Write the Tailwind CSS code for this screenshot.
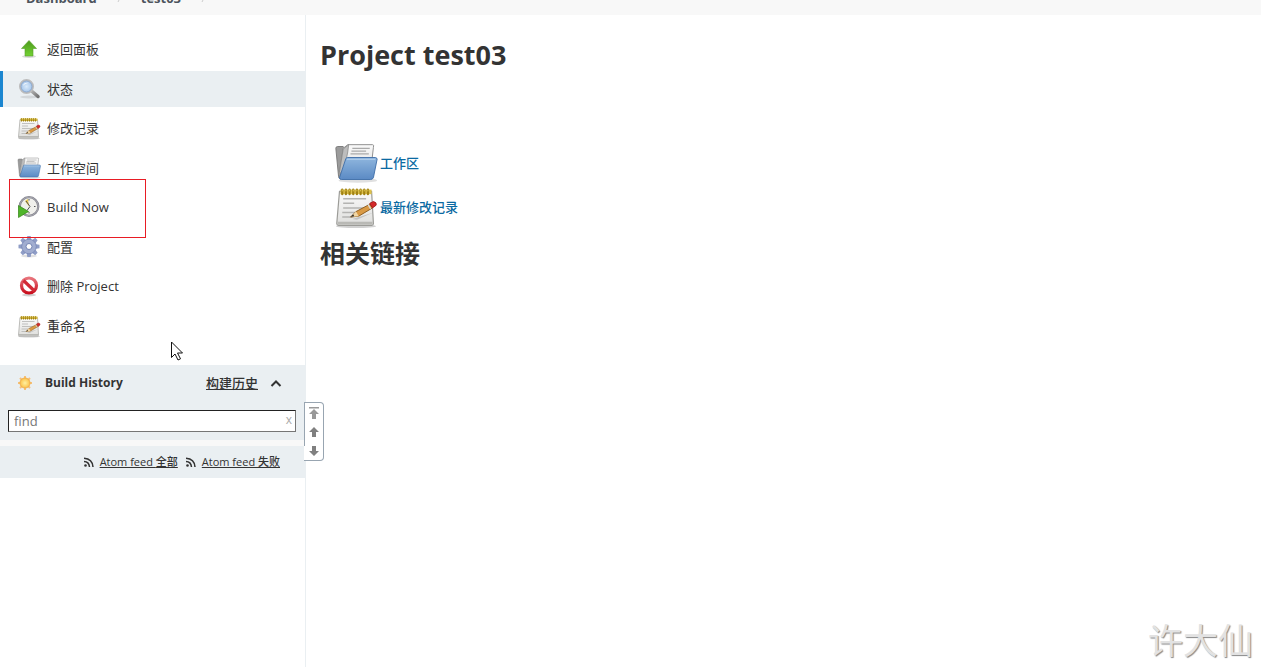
<!DOCTYPE html>
<html lang="zh-CN">
<head>
  <meta charset="UTF-8" />
  <meta name="viewport" content="width=device-width, initial-scale=1.0" />
  <title>test03 [Jenkins]</title>
  <script src="https://cdn.jsdelivr.net/npm/@tailwindcss/browser@4"></script>
  <style>
    body {
      font-family: "Open Sans", "Noto Sans CJK SC", sans-serif;
    }
  </style>
</head>
<body class="relative flex h-screen flex-col overflow-hidden bg-white text-[13px] leading-5 text-[#333]">

  <!-- Shared icons -->
  <svg class="absolute size-0">
    <defs>
      <linearGradient id="green" x1="0" y1="0" x2="0" y2="1"><stop offset="0" stop-color="#4c9a1c"/><stop offset="1" stop-color="#74d234"/></linearGradient>
      <linearGradient id="blue" x1="0" y1="0" x2="0" y2="1"><stop offset="0" stop-color="#8fb6de"/><stop offset="1" stop-color="#5b8ac4"/></linearGradient>
      <linearGradient id="paper" x1="0" y1="0" x2="0" y2="1"><stop offset="0" stop-color="#fafafa"/><stop offset="1" stop-color="#dededc"/></linearGradient>
      <linearGradient id="grey" x1="0" y1="0" x2="1" y2="1"><stop offset="0" stop-color="#b8b8b8"/><stop offset="1" stop-color="#737373"/></linearGradient>
      <linearGradient id="red" x1="0" y1="0" x2="0" y2="1"><stop offset="0" stop-color="#e8747c"/><stop offset="1" stop-color="#c90f1e"/></linearGradient>
      <radialGradient id="lens"><stop offset="0" stop-color="#d9eafa"/><stop offset="1" stop-color="#9fc1e8"/></radialGradient>
      <radialGradient id="sun"><stop offset="0" stop-color="#fff0a0"/><stop offset="1" stop-color="#fbc24a"/></radialGradient>
    </defs>
    <symbol id="notepad" viewBox="0 0 48 48">
      <ellipse cx="24" cy="45" rx="22" ry="2" fill="#000" opacity=".18"/>
      <path d="M6 7h35l2 35q0 2-2 2H5q-2 0-2-2z" fill="url(#paper)" stroke="#9c9c98" stroke-width="1.3"/>
      <path d="M4 40h38v3H4z" fill="#b9b9b5"/>
      <path d="M10 15h25M10 20h12M10 25h24M9 30h15M9 35h11" stroke="#b4b4b2" stroke-width="1.6"/>
      <path d="M7 5h34v5H7z" fill="#dcc04b"/>
      <path d="M9 5v5M13 5v5M17 5v5M21 5v5M25 5v5M29 5v5M33 5v5M37 5v5" stroke="#a18213" stroke-width="2.400" stroke-linecap="round"/>
      <path d="M9 5v2M13 5v2M17 5v2M21 5v2M25 5v2M29 5v2M33 5v2M37 5v2" stroke="#e2c854" stroke-width="1"/>
      <path d="M20 37l23-7-18 8z" fill="#000" opacity=".15"/>
      <path d="M18 35l6-6 15-8 3 4-15 9z" fill="#d99a45" stroke="#8a5a1c"/>
      <path d="M18 35l6-6 3 5z" fill="#f1d6a5"/>
      <path d="M18 35l3-3 1 2z" fill="#222"/>
      <path d="M39 20l3 5 4-3q1-3-3-4z" fill="#d42a2a" stroke="#a31c1c"/>
      <path d="M37 21l3 5" stroke="#ddd" stroke-width="1.500"/>
    </symbol>
    <symbol id="folder" viewBox="0 0 48 48">
      <ellipse cx="26" cy="43" rx="21" ry="2.500" fill="#000" opacity=".12"/>
      <path d="M2 8q0-2 2-2h6l3 4v31H7q-2 0-2-2z" fill="#9b9b9b" stroke="#777"/>
      <path d="M15 4h27q2 0 1 3l-3 26H6l4-25z" fill="url(#paper)" stroke="#888"/>
      <path d="M6 34l4-25 6-5-1 8-5 25z" fill="#bdbdbd" stroke="#858585" stroke-width=".8"/>
      <path d="M20 8h19M19 11h16M18 14h20" stroke="#aaa" stroke-width="1.300"/>
      <path d="M13 19q1-1 2-1h30q2 0 2 2l-4 20q-1 2-3 2H8q-2 0-2-2z" fill="url(#blue)" stroke="#3f6fa8" stroke-width="1"/>
      <path d="M14 20h31" stroke="#b7d2ee"/>
    </symbol>
  </svg>

  <!-- Breadcrumbs -->
  <header class="-mt-6 h-[39px] shrink-0 bg-[#f8f8f8]">
    <nav class="flex items-center gap-5 px-[26px] pt-3 font-bold text-[#4d545d]">
      <a href="#">Dashboard</a>
      <svg class="w-1" viewBox="0 0 4 8"><path d="M1 0l2 4-2 4" fill="none" stroke="#ccc"/></svg>
      <a href="#">test03</a>
      <svg class="w-1" viewBox="0 0 4 8"><path d="M1 0l2 4-2 4" fill="none" stroke="#ccc"/></svg>
    </nav>
  </header>

  <div class="flex min-h-0 flex-1">
    <!-- Side panel -->
    <aside class="relative w-[306px] shrink-0 border-r border-[#eaeff2] pt-4">
      <nav class="flex h-[313px] flex-col justify-between">
        <a href="#" class="flex h-9 items-center gap-1.5 pl-[17px]">
          <svg class="size-6" viewBox="0 0 24 24">
            <ellipse cx="12" cy="19.500" rx="7" ry="1.500" fill="#000" opacity=".15"/>
            <path d="M12 3.500l7.500 8h-3.500v7.500H8v-7.500H4.500z" fill="url(#green)" stroke="#58a02c" stroke-width=".6"/>
          </svg>
          返回面板
        </a>
        <a href="#" class="flex h-9 items-center gap-1.5 border-l-[3px] border-[#1b86d0] bg-[#eaeff2] pl-3.5">
          <svg class="size-6" viewBox="0 0 24 24">
            <ellipse cx="12" cy="20" rx="9" ry="1.500" fill="#000" opacity=".1"/>
            <path d="M14 13.500l7 6" stroke="url(#grey)" stroke-width="3.500" stroke-linecap="round"/>
            <circle cx="9.500" cy="9.500" r="6.500" fill="url(#lens)" stroke="#bcbcbc" stroke-width="2"/>
            <circle cx="9.500" cy="9.500" r="5.500" fill="none" stroke="#7c9dc8" stroke-width=".7"/>
            <path d="M6 9q1-4 6-3-4 0-6 3z" fill="#fff"/>
          </svg>
          状态
        </a>
        <a href="#" class="flex h-9 items-center gap-1.5 pl-[17px]">
          <svg class="size-6"><use href="#notepad"/></svg>
          修改记录
        </a>
        <a href="#" class="flex h-9 items-center gap-1.5 pl-[17px]">
          <svg class="size-6"><use href="#folder"/></svg>
          工作空间
        </a>
        <a href="#" class="flex h-9 items-center gap-1.5 pl-[17px]">
          <svg class="size-6" viewBox="0 0 24 24">
            <circle cx="12" cy="11.500" r="9.300" fill="#f0f0ec" stroke="#85858f" stroke-width="2.200"/>
            <circle cx="12" cy="11.500" r="9.300" fill="none" stroke="#b4b4bc" stroke-width=".7"/>
            <path d="M12 11.500L8 6l3-2z" fill="#e7c84c"/>
            <path d="M9 6l4 5.500-3 4M12 4v1.500M18.500 11.500H17M12 18.500V17" fill="none" stroke="#555" stroke-width="1"/>
            <path d="M1.500 10.500l10 6-10 6z" fill="#4fb52a" stroke="#308313" stroke-width=".7"/>
          </svg>
          Build Now
        </a>
        <a href="#" class="flex h-9 items-center gap-1.5 pl-[17px]">
          <svg class="size-6" viewBox="0 0 24 24">
            <ellipse cx="12" cy="21" rx="8" ry="1.500" fill="#000" opacity=".12"/>
            <g fill="#8f9dc6">
              <path d="M10.300 1h3.400l.8 5h-5zM10.300 22h3.400l.8-5h-5zM1.500 9.800v3.400l5 .8V9zM22.500 9.800v3.400l-5 .8V9z"/>
              <path d="M10.300 1h3.400l.8 5h-5zM10.300 22h3.400l.8-5h-5zM1.500 9.800v3.400l5 .8V9zM22.500 9.800v3.400l-5 .8V9z" transform="rotate(45 12 11.500)"/>
            </g>
            <circle cx="12" cy="11.500" r="7.300" fill="#a1add0" stroke="#7383b3" stroke-width=".7"/>
            <circle cx="12" cy="11.500" r="3" fill="#fff" stroke="#7383b3"/>
          </svg>
          配置
        </a>
        <a href="#" class="flex h-9 items-center gap-1.5 pl-[17px]">
          <svg class="size-6" viewBox="0 0 24 24">
            <ellipse cx="12" cy="21" rx="7" ry="1.500" fill="#000" opacity=".18"/>
            <circle cx="12" cy="11.500" r="7.500" fill="#fff" stroke="url(#red)" stroke-width="3.200"/>
            <path d="M6.500 6.500l11 10.500" stroke="#d22a36" stroke-width="3.200"/>
          </svg>
          删除 Project
        </a>
        <a href="#" class="flex h-9 items-center gap-1.5 pl-[17px]">
          <svg class="size-6"><use href="#notepad"/></svg>
          重命名
        </a>
      </nav>

      <!-- Build history -->
      <section class="mt-[21px]">
        <div class="bg-[#eaeff2] px-2 pb-2">
          <div class="flex h-[35px] items-center pr-[15px] pl-2">
            <svg class="size-[18px]" viewBox="0 0 18 18">
              <path d="M9 2v14M2 9h14M4 4l10 10M14 4L4 14" stroke="#f5c078" stroke-width="2"/>
              <circle cx="9" cy="9" r="5" fill="url(#sun)" stroke="#f2b04c"/>
            </svg>
            <h2 class="ml-[11px] flex-1 text-xs font-bold">Build History</h2>
            <a href="#" class="font-medium underline">构建历史</a>
            <a href="#" class="ml-3" aria-label="collapse">
              <svg class="w-3" viewBox="0 0 12 12"><path d="M1.500 9L6 4.500 10.500 9" fill="none" stroke="#333" stroke-width="2"/></svg>
            </a>
          </div>
          <div class="relative mt-2.5 mr-px">
            <input type="text" aria-label="find" placeholder="find" class="block h-[22px] w-full border border-[#767676] border-t-[#222] border-l-[#222] bg-white px-[5px] placeholder:text-[#777]" />
            <button type="button" class="absolute top-0.5 right-1 text-xs text-[#aaa]">x</button>
          </div>
        </div>
        <div class="h-1.5 bg-[#f8f8f8]"></div>
        <div class="flex h-8 items-center justify-end gap-2 bg-[#eaeff2] pr-[25px] text-[11px]">
          <a href="#" class="flex items-center gap-1.5">
            <svg class="size-2.5" viewBox="0 0 10 10"><circle cx="1.500" cy="8.500" r="1.300" fill="#333"/><path d="M0 4.500q5 0 5.500 5.500M0 1.200q8.500.5 9 8.800" fill="none" stroke="#333" stroke-width="1.500"/></svg>
            <span class="underline">Atom feed <span class="font-medium">全部</span></span>
          </a>
          <a href="#" class="flex items-center gap-1.5">
            <svg class="size-2.5" viewBox="0 0 10 10"><circle cx="1.500" cy="8.500" r="1.300" fill="#333"/><path d="M0 4.500q5 0 5.500 5.500M0 1.200q8.500.5 9 8.800" fill="none" stroke="#333" stroke-width="1.500"/></svg>
            <span class="underline">Atom feed <span class="font-medium">失败</span></span>
          </a>
        </div>
      </section>

      <!-- Build navigation -->
      <div class="absolute top-[387px] -right-[19px] flex h-[59px] w-5 flex-col items-center justify-around rounded-r border border-l-0 border-[#98a5b1] bg-white">
        <span class="absolute top-0 left-0 h-[43px] w-px bg-[#98a5b1]"></span>
        <button type="button" aria-label="newest"><svg class="block h-3 w-2.5" viewBox="0 0 10 12"><path d="M0 0h10v1.500H0zM5 2l5 5H7v5H3V7H0z" fill="#999"/></svg></button>
        <button type="button" aria-label="newer"><svg class="block h-3 w-2.5" viewBox="0 0 10 12"><path d="M5 1l5 5H7v5H3V6H0z" fill="#808080"/></svg></button>
        <button type="button" aria-label="older"><svg class="block h-3 w-2.5" viewBox="0 0 10 12"><path d="M5 11l5-5H7V1H3v5H0z" fill="#808080"/></svg></button>
      </div>
    </aside>

    <!-- Project -->
    <main class="flex-1 px-3.5 pt-5">
      <h1 class="text-[27px] leading-10 font-bold">Project test03</h1>
      <div class="mt-[66px] ml-3.5 flex flex-col items-start font-medium text-[#0b6aa2]">
        <a href="#" class="flex h-11 items-center">
          <svg class="mr-0.5 size-11"><use href="#folder"/></svg>
          工作区
        </a>
        <a href="#" class="flex h-11 items-center">
          <svg class="mr-0.5 size-11"><use href="#notepad"/></svg>
          最新修改记录
        </a>
      </div>
      <h2 class="mt-1 text-[25px] leading-10 font-bold">相关链接</h2>
    </main>
  </div>

  <!-- Highlight box, pointer and signature -->
  <div class="absolute top-[179px] left-[9px] h-[59px] w-[137px] border border-[#e81c24]"></div>
  <svg class="absolute top-[341px] left-[170px] h-5 w-3.5" viewBox="0 0 14 20"><path d="M1.500 1v15.500l3.500-3.500 3 6 2.500-1.200-3-5.800h5z" fill="#fff" stroke="#111"/></svg>
  <div class="absolute right-2 bottom-1 text-[35px] leading-[44px] text-[#e2e2e2] [text-shadow:1px_1px_1px_#888]">许大仙</div>

</body>
</html>
